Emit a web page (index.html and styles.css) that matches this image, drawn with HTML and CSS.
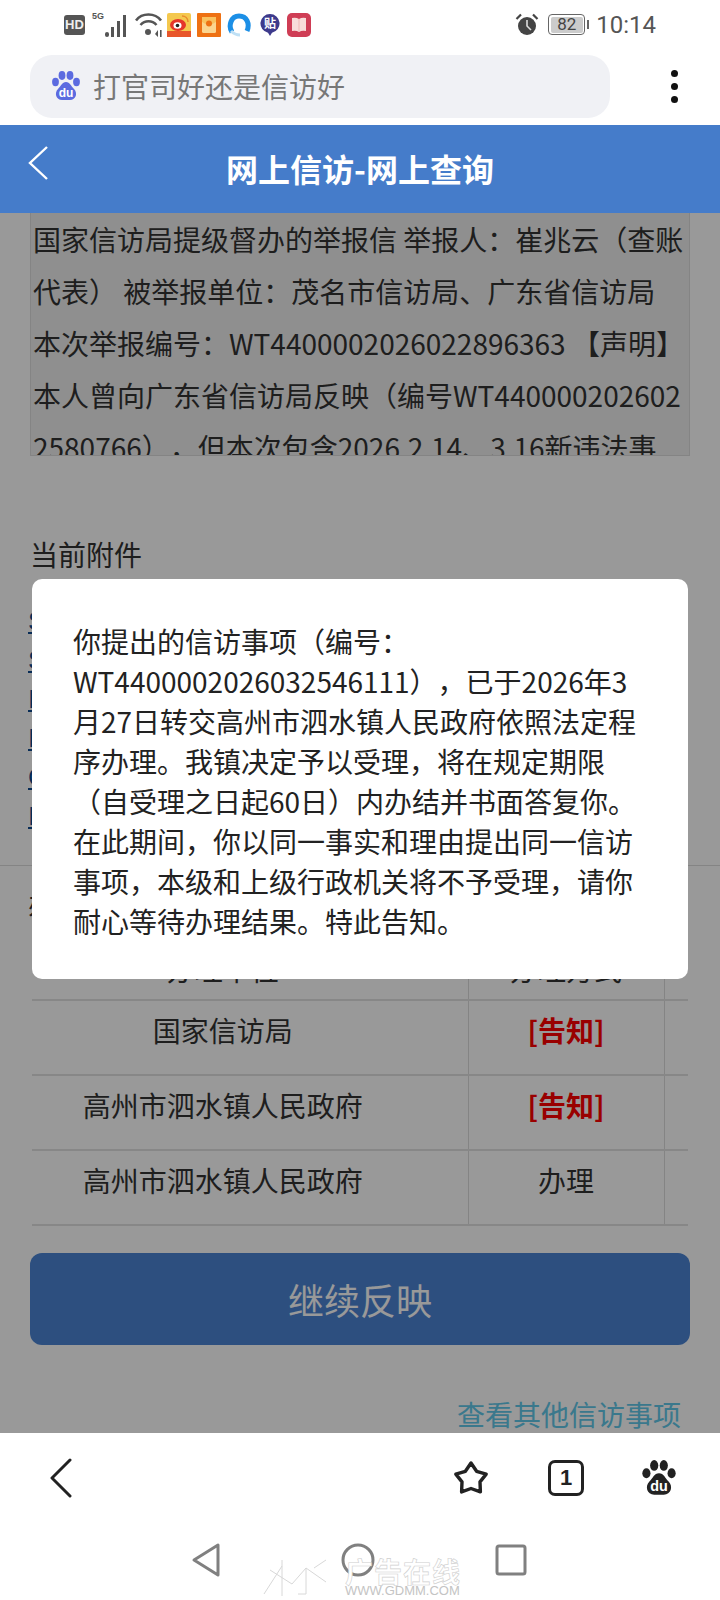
FILE: index.html
```html
<!DOCTYPE html>
<html lang="zh-CN">
<head>
<meta charset="utf-8">
<title>网上信访-网上查询</title>
<link rel="stylesheet" href="styles.css">
</head>
<body>
<div class="phone">
  <div class="status">
    <div class="status-left">
      <span class="hd">HD</span>
      <span class="signal">
        <span class="five-g">5G</span>
        <svg width="24" height="26" viewBox="0 0 24 26"><g fill="#555"><rect x="1" y="20" width="4" height="5" rx="2"/><rect x="7" y="15" width="3" height="10"/><rect x="13" y="9" width="3" height="16"/><rect x="19" y="3" width="3" height="22"/></g></svg>
      </span>
      <svg class="wifi" width="28" height="24" viewBox="0 0 28 24"><g fill="none" stroke="#555" stroke-width="2.6"><path d="M1 7.5C7-.5 20-.5 26 7.5"/><path d="M5.5 12C10 7 17 7 21.5 12"/></g><circle cx="13" cy="19" r="3" fill="#555"/><path d="M20 21l3-4v7zM25 17v7h1.6v-7z" fill="#555"/></svg>
      <span class="apps">
        <svg width="24" height="24" viewBox="0 0 24 24"><rect width="24" height="24" rx="2" fill="#f4c84e"/><rect y="18" width="24" height="6" fill="#e8562a"/><ellipse cx="11" cy="12" rx="8" ry="6" fill="#e5352b"/><ellipse cx="10.500" cy="12.500" rx="4" ry="3.300" fill="#fff"/><circle cx="10.500" cy="12.500" r="1.800" fill="#222"/><path d="M15 3c3 0 6 2 6 6" fill="none" stroke="#e98a2a" stroke-width="1.600"/></svg>
        <svg width="24" height="24" viewBox="0 0 24 24"><rect width="24" height="24" rx="1" fill="#ee7113"/><rect x="5" y="4" width="14" height="16" rx="1.500" fill="#fbd58f"/><path d="M5 4h14v5q-7 5-14 0z" fill="#f9c25f"/><circle cx="12" cy="10.500" r="3" fill="#ee7113"/></svg>
        <svg width="24" height="24" viewBox="0 0 24 24"><path d="M5 19C1 13 4 3 12 3s11 8 8 15" fill="none" stroke="#1c8fe6" stroke-width="5"/><path d="M4 18q4 4 9 4" fill="none" stroke="#bfe0f5" stroke-width="3"/></svg>
        <svg class="tie-icon" width="20" height="24" viewBox="0 0 20 24"><path d="M10 1a9.500 9.500 0 0 1 2 18.800L10 23l-2-3.200A9.500 9.500 0 0 1 10 1z" fill="#3d3a8c"/><text x="10" y="15" class="tie">贴</text></svg>
        <svg width="24" height="24" viewBox="0 0 24 24"><rect width="24" height="24" rx="5" fill="#cf3d55"/><path d="M5 5q4-1 7 1q3-2 7-1v13q-4-1-7 1q-3-2-7-1z" fill="#f8dcd9"/><path d="M12 6v13" stroke="#eeb9b5" stroke-width="1"/></svg>
      </span>
    </div>
    <div class="status-right">
      <svg width="24" height="24" viewBox="0 0 24 24"><circle cx="12" cy="13" r="9" fill="#444"/><path d="M12 7v6l4 4" fill="none" stroke="#ddd" stroke-width="1.600"/><path d="M1.500 6L6 1.500M22.500 6L18 1.500" stroke="#444" stroke-width="2.200"/></svg>
      <span class="battery"><span class="level">82</span></span>
      <span class="nub"></span>
      <span class="clock">10:14</span>
    </div>
  </div>

  <div class="address-row">
    <div class="address">
      <svg class="paw" width="28" height="30" viewBox="0 0 28 30"><g fill="#5c6be0"><ellipse cx="3.500" cy="11" rx="3.400" ry="4.200"/><ellipse cx="10" cy="4.500" rx="3.400" ry="4.400"/><ellipse cx="18" cy="4.500" rx="3.400" ry="4.400"/><ellipse cx="24.500" cy="11" rx="3.400" ry="4.200"/><path d="M14 11c4 0 5 4 8 7 4 4 2 11-4 11H10c-6 0-8-7-4-11 3-3 4-7 8-7z"/></g><text x="14" y="26" class="du du-light">du</text></svg>
      <span class="query">打官司好还是信访好</span>
    </div>
    <div class="more"><i></i><i></i><i></i></div>
  </div>

  <div class="page">
    <header class="topbar">
      <svg class="back" width="22" height="36" viewBox="0 0 22 36"><path d="M20 2L3 18l17 16" fill="none" stroke="#fff" stroke-width="2.400"/></svg>
      <h1>网上信访-网上查询</h1>
    </header>
    <main class="content">
      <div class="letter">国家信访局提级督办的举报信 举报人：崔兆云（查账代表） 被举报单位：茂名市信访局、广东省信访局 本次举报编号：WT4400002026022896363 【声明】本人曾向广东省信访局反映（编号WT4400002026022580766），但本次包含2026.2.14、3.16新违法事</div>
      <h2 class="attach-title">当前附件</h2>
      <ul class="attach-list">
        <li><a>S</a></li>
        <li><a>S</a></li>
        <li><a>I</a></li>
        <li><a>I</a></li>
        <li><a>C</a></li>
        <li><a>I</a></li>
      </ul>
      <section class="process">
        <h2 class="process-title">办理情况</h2>
        <table class="grid">
          <colgroup><col class="col-a"><col class="col-b"><col class="col-c"></colgroup>
          <tr><td>办理单位</td><td>办理方式</td><td></td></tr>
          <tr><td>国家信访局</td><td><b class="notice">[告知]</b></td><td></td></tr>
          <tr><td>高州市泗水镇人民政府</td><td><b class="notice">[告知]</b></td><td></td></tr>
          <tr><td>高州市泗水镇人民政府</td><td>办理</td><td></td></tr>
        </table>
      </section>
      <button class="primary">继续反映</button>
      <a class="others">查看其他信访事项</a>
    </main>
    <div class="overlay">
      <div class="modal">你提出的信访事项（编号：WT4400002026032546111），已于2026年3月27日转交高州市泗水镇人民政府依照法定程序办理。我镇决定予以受理，将在规定期限（自受理之日起60日）内办结并书面答复你。在此期间，你以同一事实和理由提出同一信访事项，本级和上级行政机关将不予受理，请你耐心等待办理结果。特此告知。</div>
    </div>
  </div>

  <nav class="browser-bar">
    <svg width="24" height="40" viewBox="0 0 24 40"><path d="M21 2L3 20l18 18" fill="none" stroke="#222" stroke-width="3" stroke-linecap="round" stroke-linejoin="round"/></svg>
    <div class="browser-right">
      <svg width="38" height="38" viewBox="0 0 38 38"><path d="M19 4l5.600 8.300L34.200 15.100 28 22.900 28.400 32.900 19 29.500 9.600 32.900 10 22.900 3.800 15.100 13.400 12.300z" fill="none" stroke="#222" stroke-width="3.400" stroke-linejoin="round"/></svg>
      <span class="tabs">1</span>
      <svg width="34" height="36" viewBox="0 0 28 30"><g fill="#222"><ellipse cx="3.500" cy="11" rx="3.400" ry="4.200"/><ellipse cx="10" cy="4.500" rx="3.400" ry="4.400"/><ellipse cx="18" cy="4.500" rx="3.400" ry="4.400"/><ellipse cx="24.500" cy="11" rx="3.400" ry="4.200"/><path d="M14 11c4 0 5 4 8 7 4 4 2 11-4 11H10c-6 0-8-7-4-11 3-3 4-7 8-7z"/></g><text x="14" y="26" class="du du-light">du</text></svg>
    </div>
  </nav>

  <div class="system-bar">
    <svg width="30" height="36" viewBox="0 0 30 36"><path d="M27 3v30L3 18z" fill="none" stroke="#808080" stroke-width="3" stroke-linejoin="round"/></svg>
    <svg width="34" height="34" viewBox="0 0 34 34"><circle cx="17" cy="17" r="15" fill="none" stroke="#808080" stroke-width="3"/></svg>
    <svg width="32" height="32" viewBox="0 0 32 32"><rect x="2" y="2" width="28" height="28" rx="2" fill="none" stroke="#808080" stroke-width="3"/></svg>
  </div>

  <div class="watermark">
    <svg width="70" height="38" viewBox="0 0 70 38"><g fill="none" stroke="#d8d8d8" stroke-width="1"><path d="M2 36L20 8M20 2v36M8 12l22 14 14-16 20 14M44 10v26h-8M64 2L52 10"/></g></svg>
    <div class="mark-text">
      <span class="mark-cn">广告在线</span>
      <span class="mark-en">WWW.GDMM.COM</span>
    </div>
  </div>
</div>
</body>
</html>
```
FILE: styles.css
```css
* { box-sizing: border-box; }
html, body { margin: 0; padding: 0; }
body {
  width: 720px;
  height: 1600px;
  overflow: hidden;
  background: #fff;
  font-family: "Noto Sans CJK SC", "Noto Sans", sans-serif;
  color: #333;
  text-spacing-trim: space-all;
}
.phone {
  position: relative;
  width: 720px;
  height: 1600px;
  display: flex;
  flex-direction: column;
  overflow: hidden;
}

/* status bar */
.status {
  height: 55px;
  padding: 0 64px 5px 64px;
  display: flex;
  justify-content: space-between;
  align-items: center;
}
.status-left, .status-right, .apps, .signal { display: flex; align-items: center; }
.status-left { gap: 7px; }
.hd {
  width: 21px;
  height: 20px;
  background: #555;
  border-radius: 3px;
  color: #eee;
  font: bold 13px/20px "Liberation Sans", sans-serif;
  text-align: center;
}
.signal { position: relative; padding-left: 12px; height: 26px; }
.five-g {
  position: absolute;
  left: 0;
  top: -2px;
  font: bold 9px/12px "Liberation Sans", sans-serif;
  color: #555;
}
.apps { gap: 6px; margin-left: -3px; }
.tie-icon { margin: 0 1px 0 3px; }
.tie { font-size: 12px; font-weight: 700; fill: #fff; text-anchor: middle; }
.status-right { gap: 0; color: #555; }
.status-right svg { margin-right: 9px; }
.battery {
  width: 37px;
  height: 21px;
  border: 1.500px solid #666;
  border-radius: 4px;
  padding: 1.500px;
  display: flex;
}
.level {
  flex: 1;
  background: #ccc;
  border-radius: 2px;
  font: 17px/15px "Roboto", sans-serif;
  color: #444;
  text-align: center;
}
.nub { width: 2px; height: 9px; margin: 0 7px 0 2px; background: #666; }
.clock { font: 24px/28px "Roboto", sans-serif; color: #555; }

/* address row */
.address-row {
  height: 70px;
  display: flex;
  align-items: flex-start;
  padding-left: 30px;
}
.address {
  width: 580px;
  height: 63px;
  border-radius: 22px;
  background: #f0f1f5;
  display: flex;
  align-items: center;
  padding-left: 22px;
  gap: 13px;
}
.query { font-size: 28px; color: #777; line-height: 36px; }
.more {
  margin-left: 61px;
  height: 33px;
  margin-top: 15px;
  display: flex;
  flex-direction: column;
  justify-content: space-between;
  align-items: center;
}
.more i { width: 7px; height: 7px; border-radius: 50%; background: #111; display: block; }
.du { font-family: "Liberation Sans", sans-serif; font-weight: 700; font-size: 12px; text-anchor: middle; }
.du-light { fill: #fff; }

/* page */
.page {
  position: relative;
  height: 1309px;
  overflow: hidden;
  background: #fff;
}
.topbar {
  position: relative;
  z-index: 2;
  height: 88px;
  background: #457cca;
  display: flex;
  align-items: center;
  justify-content: center;
}
.topbar h1 {
  margin: 0 0 2px;
  font-size: 32px;
  line-height: 44px;
  font-weight: 700;
  color: #fff;
}
.back { position: absolute; left: 27px; top: 20px; }
.content { padding: 0 30px; }
.letter {
  height: 243px;
  overflow: hidden;
  background: #eeeeee;
  border: 1px solid #dcdcdc;
  border-top: 0;
  padding: 0 2px;
  font-size: 28px;
  line-height: 52px;
  word-break: break-all;
  color: #333;
}
.attach-title {
  margin: 77px 0 0;
  font-size: 28px;
  font-weight: 400;
  line-height: 42px;
}
.attach-list {
  list-style: none;
  margin: 27px 0 0 -2px;
  padding: 0;
  font-family: "Liberation Sans", sans-serif;
  font-size: 26px;
  line-height: 39px;
}
.attach-list a { color: #0d4a8f; text-decoration: underline; }
.process {
  margin: 29px -30px 0;
  padding: 15px 32px 0;
  border-top: 1px solid #ddd;
}
.process-title {
  margin: 0 0 0 -4px;
  font-size: 26px;
  font-weight: 400;
  line-height: 44px;
}
.grid {
  width: 656px;
  margin-top: 0;
  border-collapse: collapse;
  table-layout: fixed;
  font-size: 28px;
  color: #333;
}
.col-a { width: 436px; }
.col-b { width: 196px; }
.col-c { width: 24px; }
.grid tr { height: 75px; }
.grid td {
  padding: 0 0 14px;
  text-align: center;
  line-height: 40px;
  border-bottom: 2px solid #e2e2e2;
  border-right: 1px solid #dcdcdc;
}
.grid tr:first-child td { padding-top: 14px; padding-bottom: 0; }
.grid td:first-child { padding-right: 54px; }
.grid td:last-child { border-right: 0; }
.notice { color: #f00; font-weight: 700; }
.primary {
  display: block;
  width: 660px;
  height: 92px;
  margin: 27px 0 0;
  border: 0;
  border-radius: 12px;
  background: #4b84d4;
  color: #fff;
  font: 36px/50px "Noto Sans CJK SC", sans-serif;
}
.others {
  display: block;
  margin: 48px 0 0;
  padding-right: 9px;
  text-align: right;
  font-size: 28px;
  line-height: 42px;
  color: #61c8ea;
}

/* dialog */
.overlay {
  position: absolute;
  inset: 0;
  z-index: 1;
  background: rgba(0, 0, 0, .4);
  display: flex;
  align-items: center;
  justify-content: center;
}
.modal {
  width: 656px;
  height: 400px;
  padding: 42px 41px 0;
  background: #fff;
  border-radius: 10px;
  font-size: 28px;
  line-height: 40px;
  color: #222;
}

/* bottom bars */
.browser-bar {
  height: 90px;
  display: flex;
  align-items: center;
  justify-content: space-between;
  padding: 0 44px 0 49px;
  background: #fff;
}
.browser-right { display: flex; align-items: center; gap: 58px; }
.tabs {
  width: 36px;
  height: 36px;
  border: 3px solid #222;
  border-radius: 7px;
  font: 700 22px/30px "Liberation Sans", sans-serif;
  text-align: center;
  color: #222;
}
.system-bar {
  height: 77px;
  display: flex;
  align-items: center;
  padding-bottom: 4px;
  padding-left: 191px;
  gap: 120px;
}
.watermark {
  position: absolute;
  left: 262px;
  top: 1558px;
  display: flex;
  gap: 13px;
}
.mark-text { display: flex; flex-direction: column; }
.mark-cn {
  font-size: 28px;
  line-height: 27px;
  font-weight: 700;
  color: #fff;
  -webkit-text-stroke: .6px #cfcfcf;
  letter-spacing: 1px;
}
.mark-en {
  font: 13px/12px "Liberation Sans", sans-serif;
  color: #c4c4c4;
}
```
